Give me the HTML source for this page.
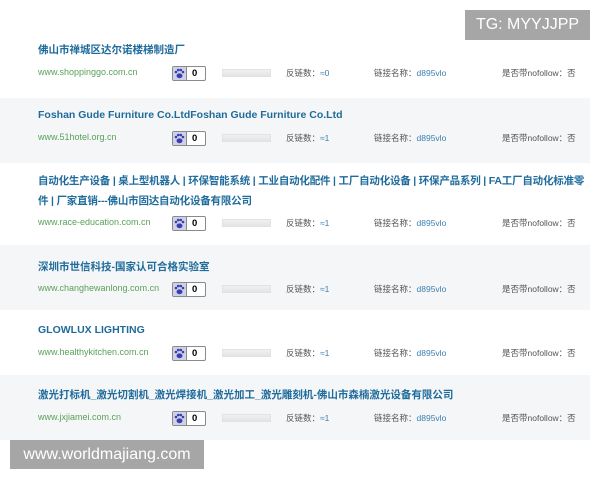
<!DOCTYPE html>
<html><head><meta charset="utf-8"><style>
*{margin:0;padding:0;box-sizing:border-box}
body{width:600px;height:480px;background:#fff;position:relative;overflow:hidden;font-family:"Liberation Sans","Noto Sans CJK SC",sans-serif}
.row{position:absolute;left:0;width:590px}
.g{background:#f5f6f7}
.t{position:absolute;left:38px;font-size:10.5px;font-weight:bold;color:#1f6b9c;white-space:nowrap;line-height:20px}
.u{position:absolute;left:38px;font-size:9px;color:#5aa15a}
.b{position:absolute;left:172px;width:34px;height:15px;border:1px solid #8a8a8a;border-radius:2px;background:#fff;font-size:9.5px;font-weight:bold;line-height:13px}
.b i{position:absolute;left:0;top:0;width:14px;height:13px;background:#cfd2e6;border-right:1px solid #8a8a8a}
.b svg{position:absolute;left:1px;top:1px}
.b span{position:absolute;left:19px;top:0}
.p{position:absolute;left:222px;width:49px;height:8px;background:linear-gradient(#f0f0f0,#e4e4e4);border:1px solid #e2e2e2}
.m{position:absolute;font-size:8.5px;color:#555;white-space:nowrap}
.m em{font-style:normal;color:#3d7fb0}
.wm{position:absolute;background:#a6a6a6;color:#fff;font-family:"Liberation Sans",sans-serif}
</style></head><body>
<div class="row g" style="top:98px;height:65px"></div>
<div class="row g" style="top:245px;height:65px"></div>
<div class="row g" style="top:375px;height:65px"></div>

<div class="t" style="top:40px">佛山市禅城区达尔诺楼梯制造厂</div>
<div class="t" style="top:105px">Foshan Gude Furniture Co.LtdFoshan Gude Furniture Co.Ltd</div>
<div class="t" style="top:171px;letter-spacing:-0.2px">自动化生产设备 | 桌上型机器人 | 环保智能系统 | 工业自动化配件 | 工厂自动化设备 | 环保产品系列 | FA工厂自动化标准零</div>
<div class="t" style="top:191px;letter-spacing:-0.2px">件 | 厂家直销---佛山市固达自动化设备有限公司</div>
<div class="t" style="top:257px">深圳市世信科技-国家认可合格实验室</div>
<div class="t" style="top:320px">GLOWLUX LIGHTING</div>
<div class="t" style="top:385px">激光打标机_激光切割机_激光焊接机_激光加工_激光雕刻机-佛山市森楠激光设备有限公司</div>

<div class="u" style="top:67px">www.shoppinggo.com.cn</div>
<div class="u" style="top:132px">www.51hotel.org.cn</div>
<div class="u" style="top:217px">www.race-education.com.cn</div>
<div class="u" style="top:283px">www.changhewanlong.com.cn</div>
<div class="u" style="top:347px">www.healthykitchen.com.cn</div>
<div class="u" style="top:412px">www.jxjiamei.com.cn</div>

<div class="b" style="top:66px"><i><svg width="11" height="11" viewBox="0 0 11 11"><g fill="#3b3eb0"><circle cx="2" cy="4" r="1.3"/><circle cx="4.2" cy="2" r="1.3"/><circle cx="6.8" cy="2" r="1.3"/><circle cx="9" cy="4" r="1.3"/><ellipse cx="5.5" cy="7.8" rx="3" ry="2.4"/></g></svg></i><span>0</span></div>
<div class="b" style="top:131px"><i><svg width="11" height="11" viewBox="0 0 11 11"><g fill="#3b3eb0"><circle cx="2" cy="4" r="1.3"/><circle cx="4.2" cy="2" r="1.3"/><circle cx="6.8" cy="2" r="1.3"/><circle cx="9" cy="4" r="1.3"/><ellipse cx="5.5" cy="7.8" rx="3" ry="2.4"/></g></svg></i><span>0</span></div>
<div class="b" style="top:216px"><i><svg width="11" height="11" viewBox="0 0 11 11"><g fill="#3b3eb0"><circle cx="2" cy="4" r="1.3"/><circle cx="4.2" cy="2" r="1.3"/><circle cx="6.8" cy="2" r="1.3"/><circle cx="9" cy="4" r="1.3"/><ellipse cx="5.5" cy="7.8" rx="3" ry="2.4"/></g></svg></i><span>0</span></div>
<div class="b" style="top:282px"><i><svg width="11" height="11" viewBox="0 0 11 11"><g fill="#3b3eb0"><circle cx="2" cy="4" r="1.3"/><circle cx="4.2" cy="2" r="1.3"/><circle cx="6.8" cy="2" r="1.3"/><circle cx="9" cy="4" r="1.3"/><ellipse cx="5.5" cy="7.8" rx="3" ry="2.4"/></g></svg></i><span>0</span></div>
<div class="b" style="top:346px"><i><svg width="11" height="11" viewBox="0 0 11 11"><g fill="#3b3eb0"><circle cx="2" cy="4" r="1.3"/><circle cx="4.2" cy="2" r="1.3"/><circle cx="6.8" cy="2" r="1.3"/><circle cx="9" cy="4" r="1.3"/><ellipse cx="5.5" cy="7.8" rx="3" ry="2.4"/></g></svg></i><span>0</span></div>
<div class="b" style="top:411px"><i><svg width="11" height="11" viewBox="0 0 11 11"><g fill="#3b3eb0"><circle cx="2" cy="4" r="1.3"/><circle cx="4.2" cy="2" r="1.3"/><circle cx="6.8" cy="2" r="1.3"/><circle cx="9" cy="4" r="1.3"/><ellipse cx="5.5" cy="7.8" rx="3" ry="2.4"/></g></svg></i><span>0</span></div>

<div class="p" style="top:69px"></div>
<div class="p" style="top:134px"></div>
<div class="p" style="top:219px"></div>
<div class="p" style="top:285px"></div>
<div class="p" style="top:349px"></div>
<div class="p" style="top:414px"></div>

<div class="m" style="left:286px;top:67px">反链数：<em>≈0</em></div>
<div class="m" style="left:374px;top:67px">链接名称：<em>d895vlo</em></div>
<div class="m" style="left:502px;top:67px">是否带nofollow：否</div>
<div class="m" style="left:286px;top:132px">反链数：<em>≈1</em></div>
<div class="m" style="left:374px;top:132px">链接名称：<em>d895vlo</em></div>
<div class="m" style="left:502px;top:132px">是否带nofollow：否</div>
<div class="m" style="left:286px;top:217px">反链数：<em>≈1</em></div>
<div class="m" style="left:374px;top:217px">链接名称：<em>d895vlo</em></div>
<div class="m" style="left:502px;top:217px">是否带nofollow：否</div>
<div class="m" style="left:286px;top:283px">反链数：<em>≈1</em></div>
<div class="m" style="left:374px;top:283px">链接名称：<em>d895vlo</em></div>
<div class="m" style="left:502px;top:283px">是否带nofollow：否</div>
<div class="m" style="left:286px;top:347px">反链数：<em>≈1</em></div>
<div class="m" style="left:374px;top:347px">链接名称：<em>d895vlo</em></div>
<div class="m" style="left:502px;top:347px">是否带nofollow：否</div>
<div class="m" style="left:286px;top:412px">反链数：<em>≈1</em></div>
<div class="m" style="left:374px;top:412px">链接名称：<em>d895vlo</em></div>
<div class="m" style="left:502px;top:412px">是否带nofollow：否</div>

<div class="wm" style="left:465px;top:10px;width:125px;height:30px;font-size:16px;line-height:30px;text-align:center">TG: MYYJJPP</div>
<div class="wm" style="left:10px;top:440px;width:194px;height:29px;font-size:16px;line-height:29px;text-align:center">www.worldmajiang.com</div>
</body></html>
